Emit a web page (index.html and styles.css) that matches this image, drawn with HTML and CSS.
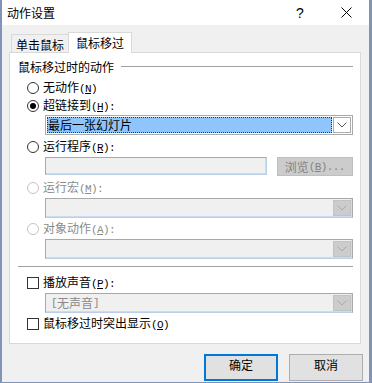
FILE: index.html
```html
<!DOCTYPE html>
<html>
<head>
<meta charset="utf-8">
<link rel="stylesheet" href="styles.css">
</head>
<body>
<div class="screen">
  <div class="dialog">
    <div class="titlebar">
      <span class="title">动作设置</span>
      <span class="help">?</span>
      <span class="close"><svg width="11" height="11" viewBox="0 0 11 11"><path d="M0.5 0.5 L10.5 10.5 M10.5 0.5 L0.5 10.5" stroke="#000" stroke-width="1" fill="none"/></svg></span>
    </div>
    <div class="client">
      <div class="tabs">
        <div class="tab">单击鼠标</div>
        <div class="tab active">鼠标移过</div>
      </div>
      <div class="panel">
        <div class="group-head"><span>鼠标移过时的动作</span><span class="rule"></span></div>

        <div class="opt m9"><span class="radio"></span><span>无动作<span class="a">(<u>N</u>)</span></span></div>
        <div class="opt m6"><span class="radio on"></span><span>超链接到<span class="a">(<u>H</u>):</span></span></div>
        <div class="field m3">
          <div class="select">
            <div class="value focus">最后一张幻灯片</div>
            <div class="arrow"><svg width="10" height="6" viewBox="0 0 10 6"><path d="M0.5 0.5 L5 5 L9.5 0.5" stroke="#555" stroke-width="1" fill="none"/></svg></div>
          </div>
        </div>

        <div class="opt m6"><span class="radio"></span><span>运行程序<span class="a">(<u>R</u>):</span></span></div>
        <div class="field m4 row">
          <div class="textbox"></div>
          <div class="browse">浏览<span class="a">(<u>B</u>)...</span></div>
        </div>

        <div class="opt m6 disabled"><span class="radio"></span><span>运行宏<span class="a">(<u>M</u>):</span></span></div>
        <div class="field m4">
          <div class="select dis">
            <div class="value"></div>
            <div class="arrow"><svg width="10" height="6" viewBox="0 0 10 6"><path d="M0.5 0.5 L5 5 L9.5 0.5" stroke="#a8a8a8" stroke-width="1" fill="none"/></svg></div>
          </div>
        </div>

        <div class="opt m5 disabled"><span class="radio"></span><span>对象动作<span class="a">(<u>A</u>):</span></span></div>
        <div class="field m4">
          <div class="select dis">
            <div class="value"></div>
            <div class="arrow"><svg width="10" height="6" viewBox="0 0 10 6"><path d="M0.5 0.5 L5 5 L9.5 0.5" stroke="#a8a8a8" stroke-width="1" fill="none"/></svg></div>
          </div>
        </div>

        <div class="sep"></div>

        <div class="opt m10"><span class="check"></span><span>播放声音<span class="a">(<u>P</u>):</span></span></div>
        <div class="field m4">
          <div class="select dis">
            <div class="value grey"><span class="a">[</span>无声音<span class="a">]</span></div>
            <div class="arrow"><svg width="10" height="6" viewBox="0 0 10 6"><path d="M0.5 0.5 L5 5 L9.5 0.5" stroke="#a8a8a8" stroke-width="1" fill="none"/></svg></div>
          </div>
        </div>
        <div class="opt m5"><span class="check"></span><span>鼠标移过时突出显示<span class="a">(<u>O</u>)</span></span></div>
      </div>
      <div class="buttons">
        <div class="btn default">确定</div>
        <div class="btn">取消</div>
      </div>
    </div>
  </div>
</div>
</body>
</html>
```

FILE: styles.css
```css
html, body {
  margin: 0;
  padding: 0;
}
body {
  width: 372px;
  height: 383px;
  overflow: hidden;
  background: #8193b6;
  font-family: "Noto Sans CJK SC", "Noto Sans", sans-serif;
  font-size: 12px;
  color: #000;
}
.a {
  font-family: "Liberation Mono", monospace;
  font-size: 11px;
  letter-spacing: -0.6px;
}
.screen {
  display: flex;
  padding-left: 2px;
}
.dialog {
  width: 367px;
  height: 382px;
  background: #f0f0f0;
  display: flex;
  flex-direction: column;
}
.titlebar {
  height: 25px;
  background: #fff;
  display: flex;
  align-items: center;
  padding-left: 5px;
}
.title {
  line-height: 12px;
  font-size: 12px;
}
.help {
  margin-left: auto;
  font-family: "Liberation Sans", sans-serif;
  font-size: 14px;
  line-height: 14px;
  width: 8px;
  margin-right: 37px;
}
.close {
  display: flex;
  margin-right: 17px;
}
.client {
  padding: 7px 0 0 7px;
  display: flex;
  flex-direction: column;
}
.tabs {
  display: flex;
  align-items: flex-end;
  height: 20px;
  margin-left: 2px;
}
.tab {
  height: 18px;
  width: 57px;
  box-sizing: border-box;
  border: 1px solid #d9d9d9;
  border-bottom: none;
  border-right: none;
  background: #f0f0f0;
  display: flex;
  align-items: center;
  justify-content: center;
  line-height: 12px;
  padding-top: 2px;
}
.tab.active {
  height: 21px;
  width: 64px;
  background: #fff;
  border-right: 1px solid #d9d9d9;
  margin-bottom: -1px;
  position: relative;
  z-index: 1;
  padding-top: 0;
}
.panel {
  width: 352px;
  height: 292px;
  box-sizing: border-box;
  border: 1px solid #d9d9d9;
  background: #fff;
  padding: 8px 7px 0 8px;
  display: flex;
  flex-direction: column;
}
.group-head {
  height: 12px;
  display: flex;
  align-items: center;
  line-height: 12px;
}
.group-head .rule {
  flex: 1;
  height: 1px;
  background: #a0a0a0;
  margin-left: 7px;
  margin-top: -1px;
}
.opt {
  height: 12px;
  display: flex;
  align-items: center;
  padding-left: 9px;
  line-height: 12px;
}
.opt.disabled {
  color: #8a8a8a;
}
.m3 { margin-top: 3px; }
.m4 { margin-top: 4px; }
.m5 { margin-top: 5px; }
.m6 { margin-top: 6px; }
.m9 { margin-top: 9px; }
.m10 { margin-top: 10px; }
.radio {
  width: 12px;
  height: 12px;
  box-sizing: border-box;
  border: 1px solid #333;
  border-radius: 50%;
  background: #fff;
  margin-right: 4px;
  display: flex;
  align-items: center;
  justify-content: center;
  flex: none;
}
.radio.on::after {
  content: "";
  width: 6px;
  height: 6px;
  border-radius: 50%;
  background: #000;
}
.disabled .radio {
  border-color: #c4c4c4;
}
.check {
  width: 12px;
  height: 12px;
  box-sizing: border-box;
  border: 1px solid #333;
  background: #fff;
  margin-right: 4px;
  flex: none;
}
.field {
  padding-left: 27px;
  display: flex;
}
.field.row {
  gap: 10px;
  align-items: flex-start;
}
.select {
  flex: 1;
  height: 20px;
  box-sizing: border-box;
  border: 1px solid #a9a9a9;
  padding: 1px;
  background: #fff;
  display: flex;
  gap: 1px;
}
.select .value {
  flex: 1;
  box-sizing: border-box;
  display: flex;
  align-items: center;
  padding-left: 1px;
  line-height: 12px;
}
.select .value.focus {
  background: #8ec5fc;
  outline: 1px dotted #333;
  outline-offset: -1px;
}
.select .arrow {
  width: 18px;
  box-sizing: border-box;
  border: 1px solid #adadad;
  background: #fff;
  display: flex;
  align-items: center;
  justify-content: center;
}
.select.dis {
  background: #f0f0f0;
  border-color: #a9a9a9 #a9a9a9 #b8cfe7 #a9a9a9;
  box-shadow: inset -1px -1px 0 #c9dcf0;
}
.select.dis .arrow {
  background: #cccccc;
  border-color: #c2c2c2;
}
.select .value.grey {
  color: #8a8a8a;
  padding-left: 4px;
}
.textbox {
  width: 223px;
  height: 18px;
  box-sizing: border-box;
  background: #f0f0f0;
  border: 1px solid #a9a9a9;
  border-bottom-color: #b8cfe7;
  border-right-color: #b8cfe7;
  box-shadow: inset -1px -1px 0 #c9dcf0;
}
.browse {
  width: 77px;
  height: 19px;
  box-sizing: border-box;
  background: #cccccc;
  border: 1px solid #bfbfbf;
  color: #838383;
  display: flex;
  align-items: center;
  justify-content: center;
  line-height: 12px;
}
.sep {
  height: 1px;
  background: #a0a0a0;
  margin-top: 7px;
}
.buttons {
  display: flex;
  justify-content: flex-end;
  gap: 11px;
  margin-top: 10px;
  padding-right: 6px;
}
.btn {
  width: 74px;
  height: 27px;
  box-sizing: border-box;
  background: #e1e1e1;
  border: 1px solid #adadad;
  display: flex;
  justify-content: center;
  padding-top: 4px;
  line-height: 12px;
}
.btn.default {
  border: 2px solid #0078d7;
  padding-top: 3px;
}
```
